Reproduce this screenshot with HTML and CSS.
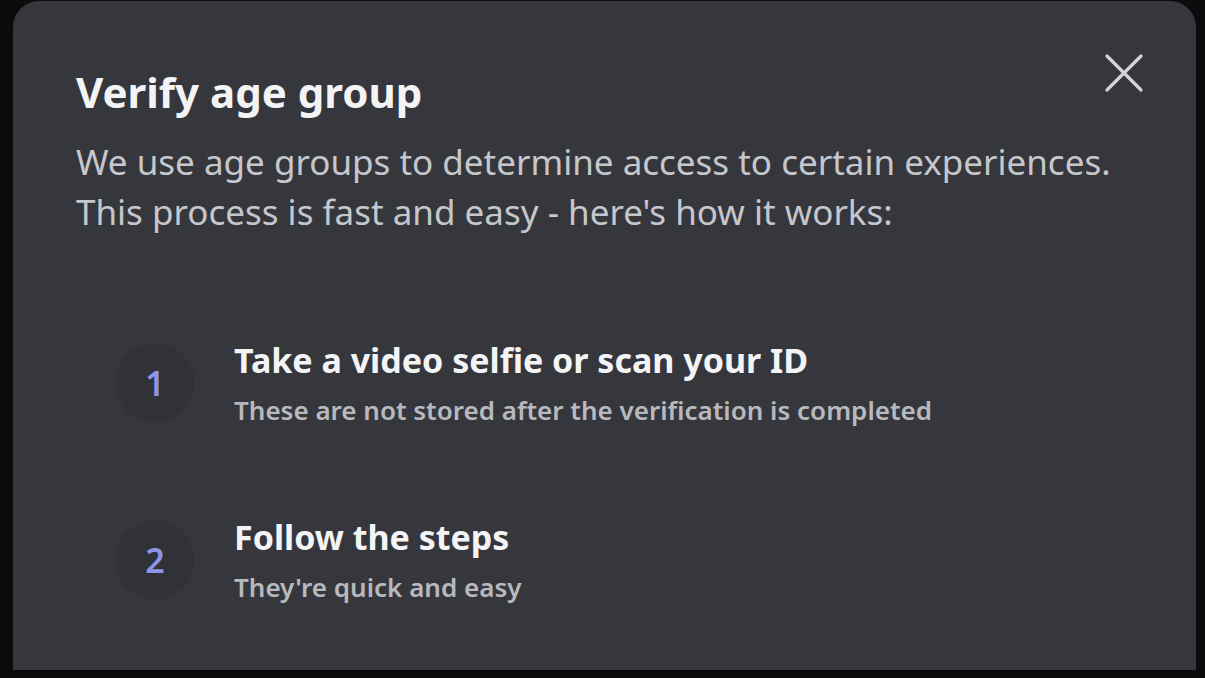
FILE: index.html
```html
<!DOCTYPE html>
<html>
<head>
<meta charset="UTF-8">
<title>Verify age group</title>
<link rel="stylesheet" href="styles.css">
</head>
<body>
<div class="modal">
    <button class="close" aria-label="Close">
        <svg width="40" height="40" viewBox="0 0 40 40"><path d="M3 3 L37 37 M37 3 L3 37" stroke="#d2d3d7" stroke-width="3.2" stroke-linecap="round" fill="none"/></svg>
    </button>
    <h1>Verify age group</h1>
    <p class="intro">We use age groups to determine access to certain experiences.<br>This process is fast and easy - here's how it works:</p>
    <ol class="steps">
        <li class="step">
            <div class="num">1</div>
            <div class="text">
                <div class="stepTitle">Take a video selfie or scan your ID</div>
                <div class="stepDesc">These are not stored after the verification is completed</div>
            </div>
        </li>
        <li class="step">
            <div class="num">2</div>
            <div class="text">
                <div class="stepTitle">Follow the steps</div>
                <div class="stepDesc">They're quick and easy</div>
            </div>
        </li>
    </ol>
</div>
</body>
</html>
```
FILE: styles.css
```css
html, body {
    margin: 0;
    height: 100%;
    background-color: #0b0b0c;
    overflow: hidden;
}
body {
    font-family: "Noto Sans", "Open Sans", sans-serif;
}
.modal {
    position: relative;
    box-sizing: border-box;
    margin: 1px 0 0 13px;
    width: 1183px;
    height: 669px;
    background-color: #36373d;
    border-radius: 26px 26px 0 0;
    padding: 60px 0 0 63px;
}
.close {
    position: absolute;
    top: 52px;
    right: 52px;
    background: none;
    border: 0;
    padding: 0;
    width: 40px;
    height: 40px;
}
h1 {
    margin: 0;
    color: #f4f4f6;
    font-size: 42px;
    font-weight: 700;
    line-height: 62px;
}
.intro {
    margin: 14px 0 0;
    color: #c6c7cc;
    font-size: 35px;
    line-height: 50px;
}
.steps {
    list-style: none;
    margin: 98px 0 0 39px;
    padding: 0;
}
.step {
    display: flex;
    align-items: center;
    gap: 39px;
    height: 96px;
    margin-bottom: 81px;
}
.num {
    width: 80px;
    height: 80px;
    border-radius: 50%;
    background-color: #313238;
    color: #8f95e6;
    font-size: 34px;
    font-weight: 600;
    display: flex;
    align-items: center;
    justify-content: center;
}
.stepTitle {
    color: #f4f4f6;
    font-size: 34px;
    font-weight: 700;
    line-height: 50px;
}
.stepDesc {
    margin-top: 4px;
    color: #b8b9be;
    font-size: 26px;
    font-weight: 600;
    line-height: 42px;
}
```
